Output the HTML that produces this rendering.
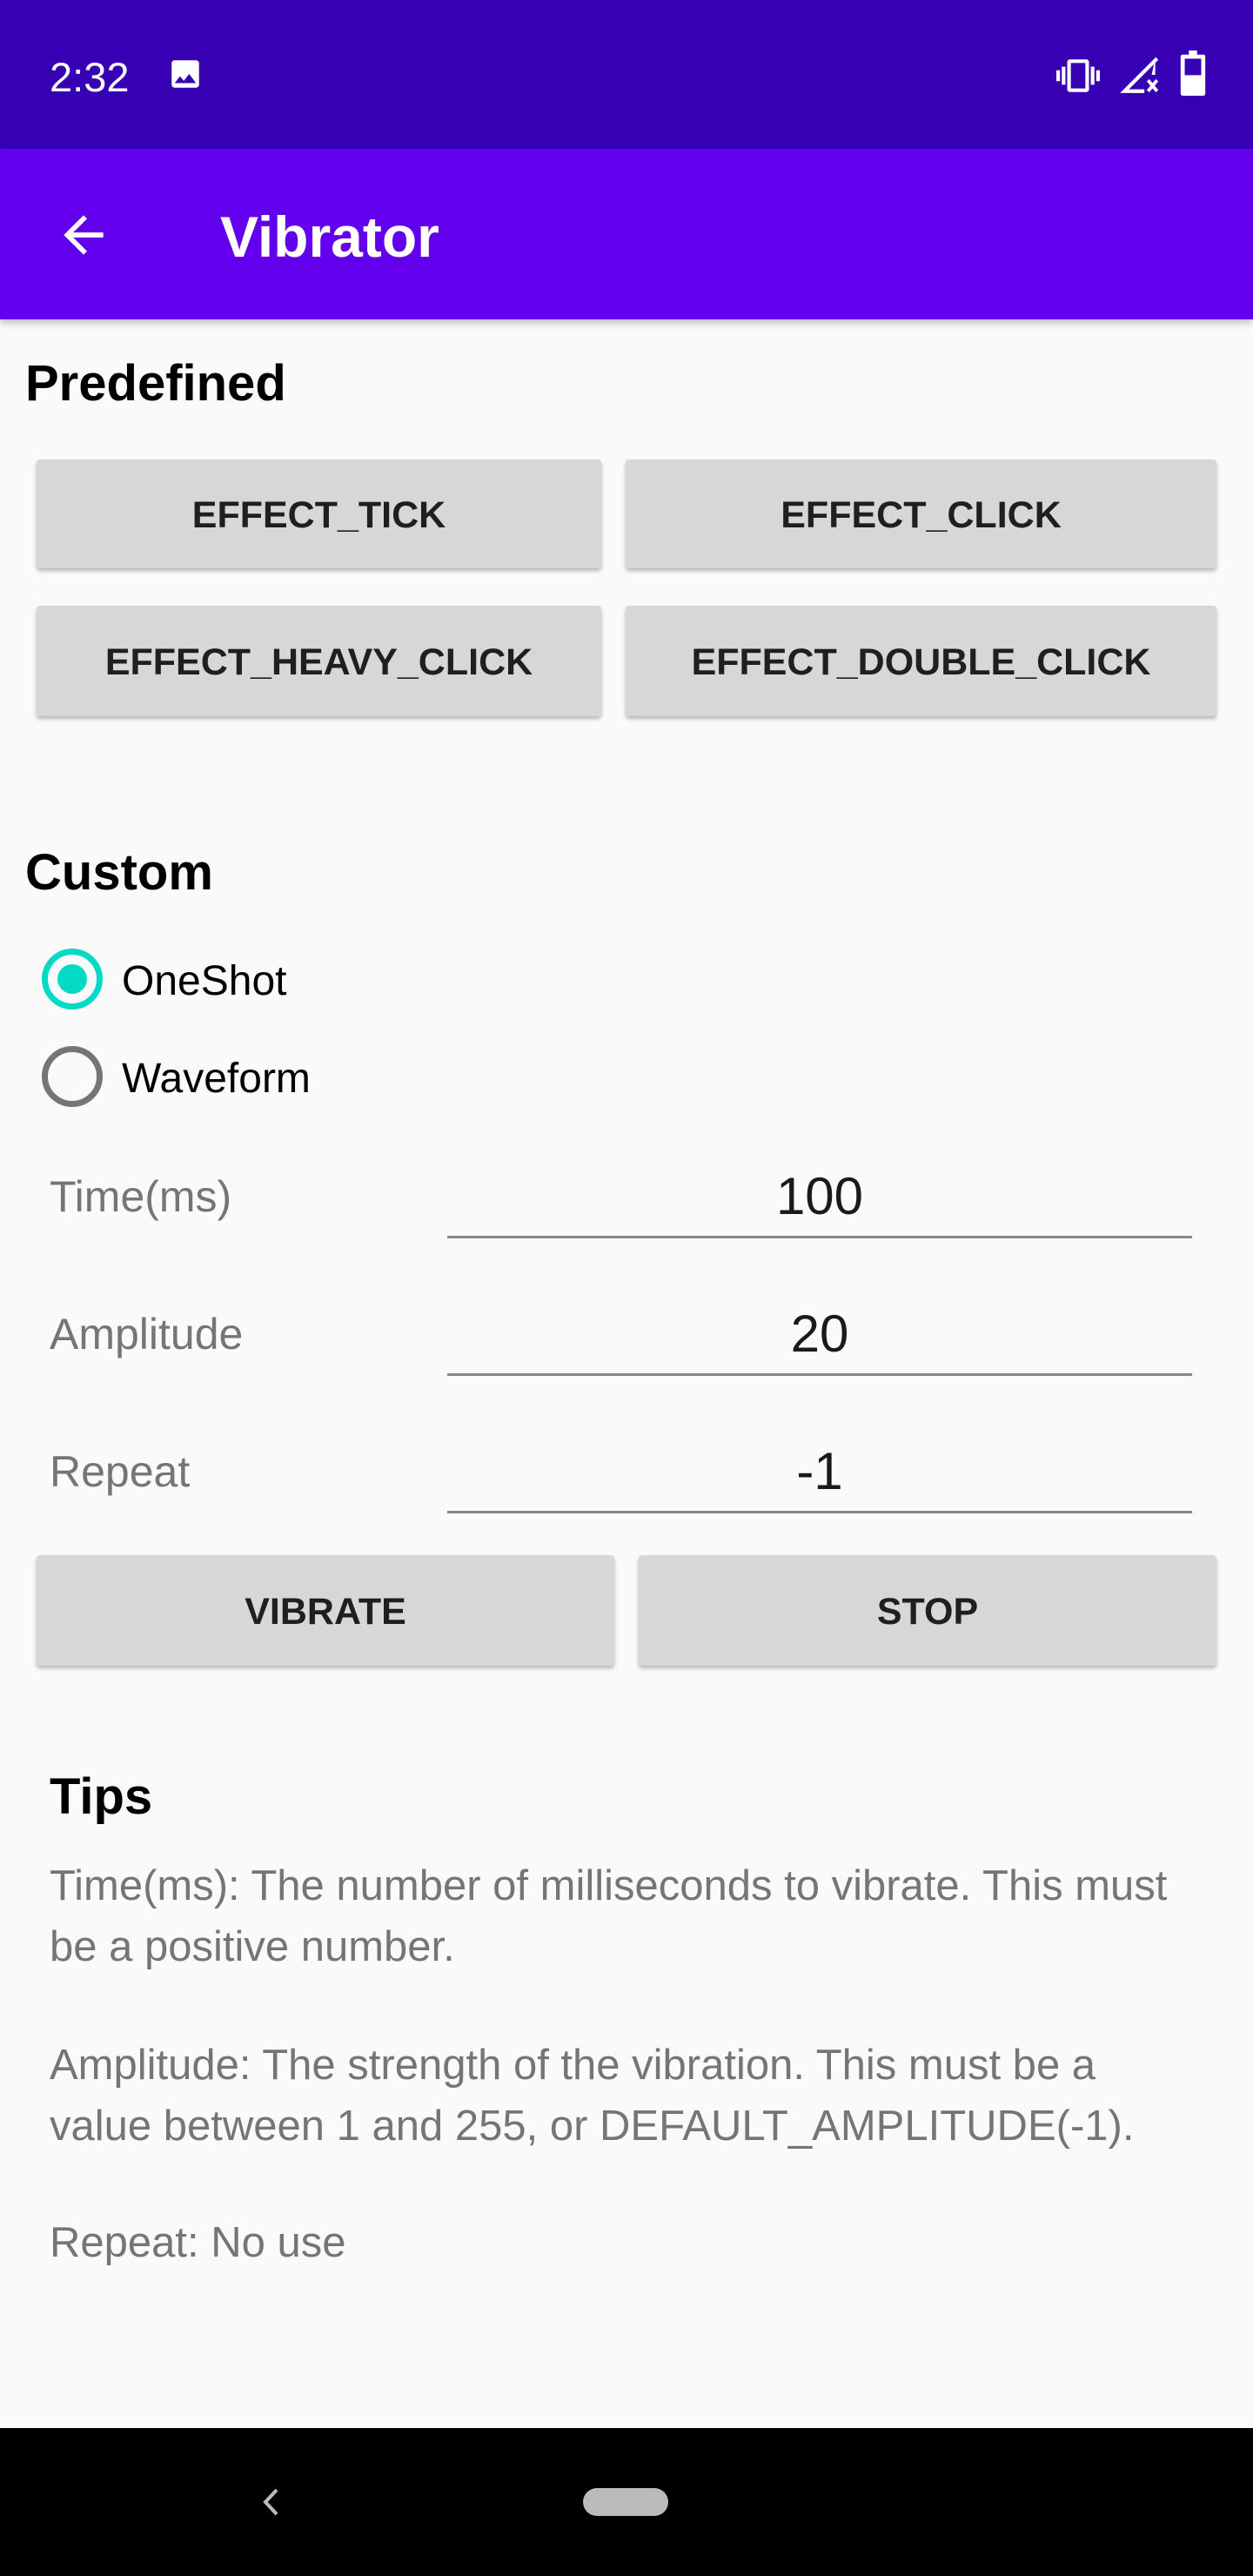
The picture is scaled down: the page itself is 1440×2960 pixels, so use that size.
<!DOCTYPE html>
<html><head><meta charset="utf-8"><style>
*{margin:0;padding:0;box-sizing:border-box}
body{width:1440px;height:2960px;background:#fafafa;font-family:"Liberation Sans",sans-serif;position:relative;overflow:hidden}
.abs{position:absolute}
.sb{left:0;top:0;width:1440px;height:171px;background:#3700b3}
.ab{left:0;top:171px;width:1440px;height:196px;background:#6200ee;box-shadow:0 4px 8px rgba(0,0,0,.25)}
.btn{position:absolute;background:#d6d7d7;box-shadow:0 3px 5px rgba(0,0,0,.28);border-radius:4px;display:flex;align-items:center;justify-content:center;font-size:43px;font-weight:bold;color:#1f1f1f;letter-spacing:0;padding-top:4px}
.h{position:absolute;font-size:58px;font-weight:bold;color:#000}
.lbl{position:absolute;left:57px;font-size:50px;color:#757575}
.val{position:absolute;left:514px;width:856px;text-align:center;font-size:60px;color:#1a1a1a}
.line{position:absolute;left:514px;width:856px;height:3px;background:#888}
.tip{position:absolute;left:57px;font-size:49px;color:#757575;line-height:70px;white-space:nowrap}
</style></head><body>
<div class="abs sb"></div>
<div class="abs" style="left:57px;top:61px;font-size:47px;color:#fff">2:32</div>
<svg class="abs" style="left:192px;top:64px" width="42" height="42" viewBox="0 0 24 24"><path fill="#fff" d="M21 19V5a2 2 0 0 0-2-2H5a2 2 0 0 0-2 2v14a2 2 0 0 0 2 2h14a2 2 0 0 0 2-2zM8.5 13.5l2.5 3 3.5-4.5 4.5 6H5l3.5-4.5z"/></svg>
<svg class="abs" style="left:1214px;top:62px" width="50" height="50" viewBox="0 0 24 24"><path fill="#fff" d="M0 15h2V9H0v6zm3 2h2V7H3v10zm19-8v6h2V9h-2zm-3 8h2V7h-2v10zM16.5 3h-9C6.67 3 6 3.67 6 4.5v15c0 .83.67 1.5 1.5 1.5h9c.83 0 1.5-.67 1.5-1.5v-15c0-.83-.67-1.5-1.5-1.5zM16 19H8V5h8v14z"/></svg>
<svg class="abs" style="left:1286px;top:60px" width="50" height="52" viewBox="0 0 24 24"><path fill="none" stroke="#fff" stroke-width="2" d="M21 3L3 21h11"/><path fill="#fff" d="M20 3v9h-2z"/><path stroke="#fff" stroke-width="1.8" d="M16 15l5 6M21 15l-5 6"/></svg>
<svg class="abs" style="left:1356px;top:58px" width="30" height="52" viewBox="0 0 12 22"><path fill="#fff" d="M4 0h4v2h3a1 1 0 0 1 1 1v18a1 1 0 0 1-1 1H1a1 1 0 0 1-1-1V3a1 1 0 0 1 1-1h3z"/><rect x="2" y="4" width="8" height="8" fill="#3700b3"/></svg>
<div class="abs ab"></div>
<svg class="abs" style="left:62px;top:236px" width="68" height="68" viewBox="0 0 24 24"><path fill="#fff" d="M20 11H7.83l5.59-5.59L12 4l-8 8 8 8 1.41-1.41L7.83 13H20v-2z"/></svg>
<div class="abs" style="left:253px;top:234px;font-size:66px;font-weight:bold;color:#fff">Vibrator</div>
<div class="h" style="left:29px;top:407px">Predefined</div>
<div class="btn" style="left:42px;top:528px;width:649px;height:125px">EFFECT_TICK</div>
<div class="btn" style="left:719px;top:528px;width:679px;height:125px">EFFECT_CLICK</div>
<div class="btn" style="left:42px;top:696px;width:649px;height:127px">EFFECT_HEAVY_CLICK</div>
<div class="btn" style="left:719px;top:696px;width:679px;height:127px">EFFECT_DOUBLE_CLICK</div>
<div class="h" style="left:29px;top:969px">Custom</div>
<div class="abs" style="left:48px;top:1090px;width:70px;height:70px;border-radius:50%;border:7px solid #03dac5"></div>
<div class="abs" style="left:66px;top:1108px;width:34px;height:34px;border-radius:50%;background:#03dac5"></div>
<div class="abs" style="left:140px;top:1100px;font-size:48px;color:#000">OneShot</div>
<div class="abs" style="left:48px;top:1202px;width:70px;height:70px;border-radius:50%;border:7px solid #757575"></div>
<div class="abs" style="left:140px;top:1212px;font-size:48px;color:#000">Waveform</div>
<div class="lbl" style="top:1346px">Time(ms)</div>
<div class="val" style="top:1340px">100</div>
<div class="line" style="top:1420px"></div>
<div class="lbl" style="top:1504px">Amplitude</div>
<div class="val" style="top:1498px">20</div>
<div class="line" style="top:1578px"></div>
<div class="lbl" style="top:1662px">Repeat</div>
<div class="val" style="top:1656px">-1</div>
<div class="line" style="top:1736px"></div>
<div class="btn" style="left:42px;top:1787px;width:664px;height:127px">VIBRATE</div>
<div class="btn" style="left:734px;top:1787px;width:664px;height:127px">STOP</div>
<div class="h" style="left:57px;top:2031px">Tips</div>
<div class="tip" style="top:2132px">Time(ms): The number of milliseconds to vibrate. This must<br>be a positive number.</div>
<div class="tip" style="top:2338px">Amplitude: The strength of the vibration. This must be a<br>value between 1 and 255, or DEFAULT_AMPLITUDE(-1).</div>
<div class="tip" style="top:2542px">Repeat: No use</div>
<div class="abs" style="left:0;top:2790px;width:1440px;height:170px;background:#000"></div>
<svg class="abs" style="left:296px;top:2858px" width="30" height="34" viewBox="0 0 30 34"><path fill="none" stroke="#bbb" stroke-width="4" d="M22 3L9 17l13 14"/></svg>
<div class="abs" style="left:670px;top:2859px;width:98px;height:32px;border-radius:16px;background:#bbb"></div>
</body></html>
